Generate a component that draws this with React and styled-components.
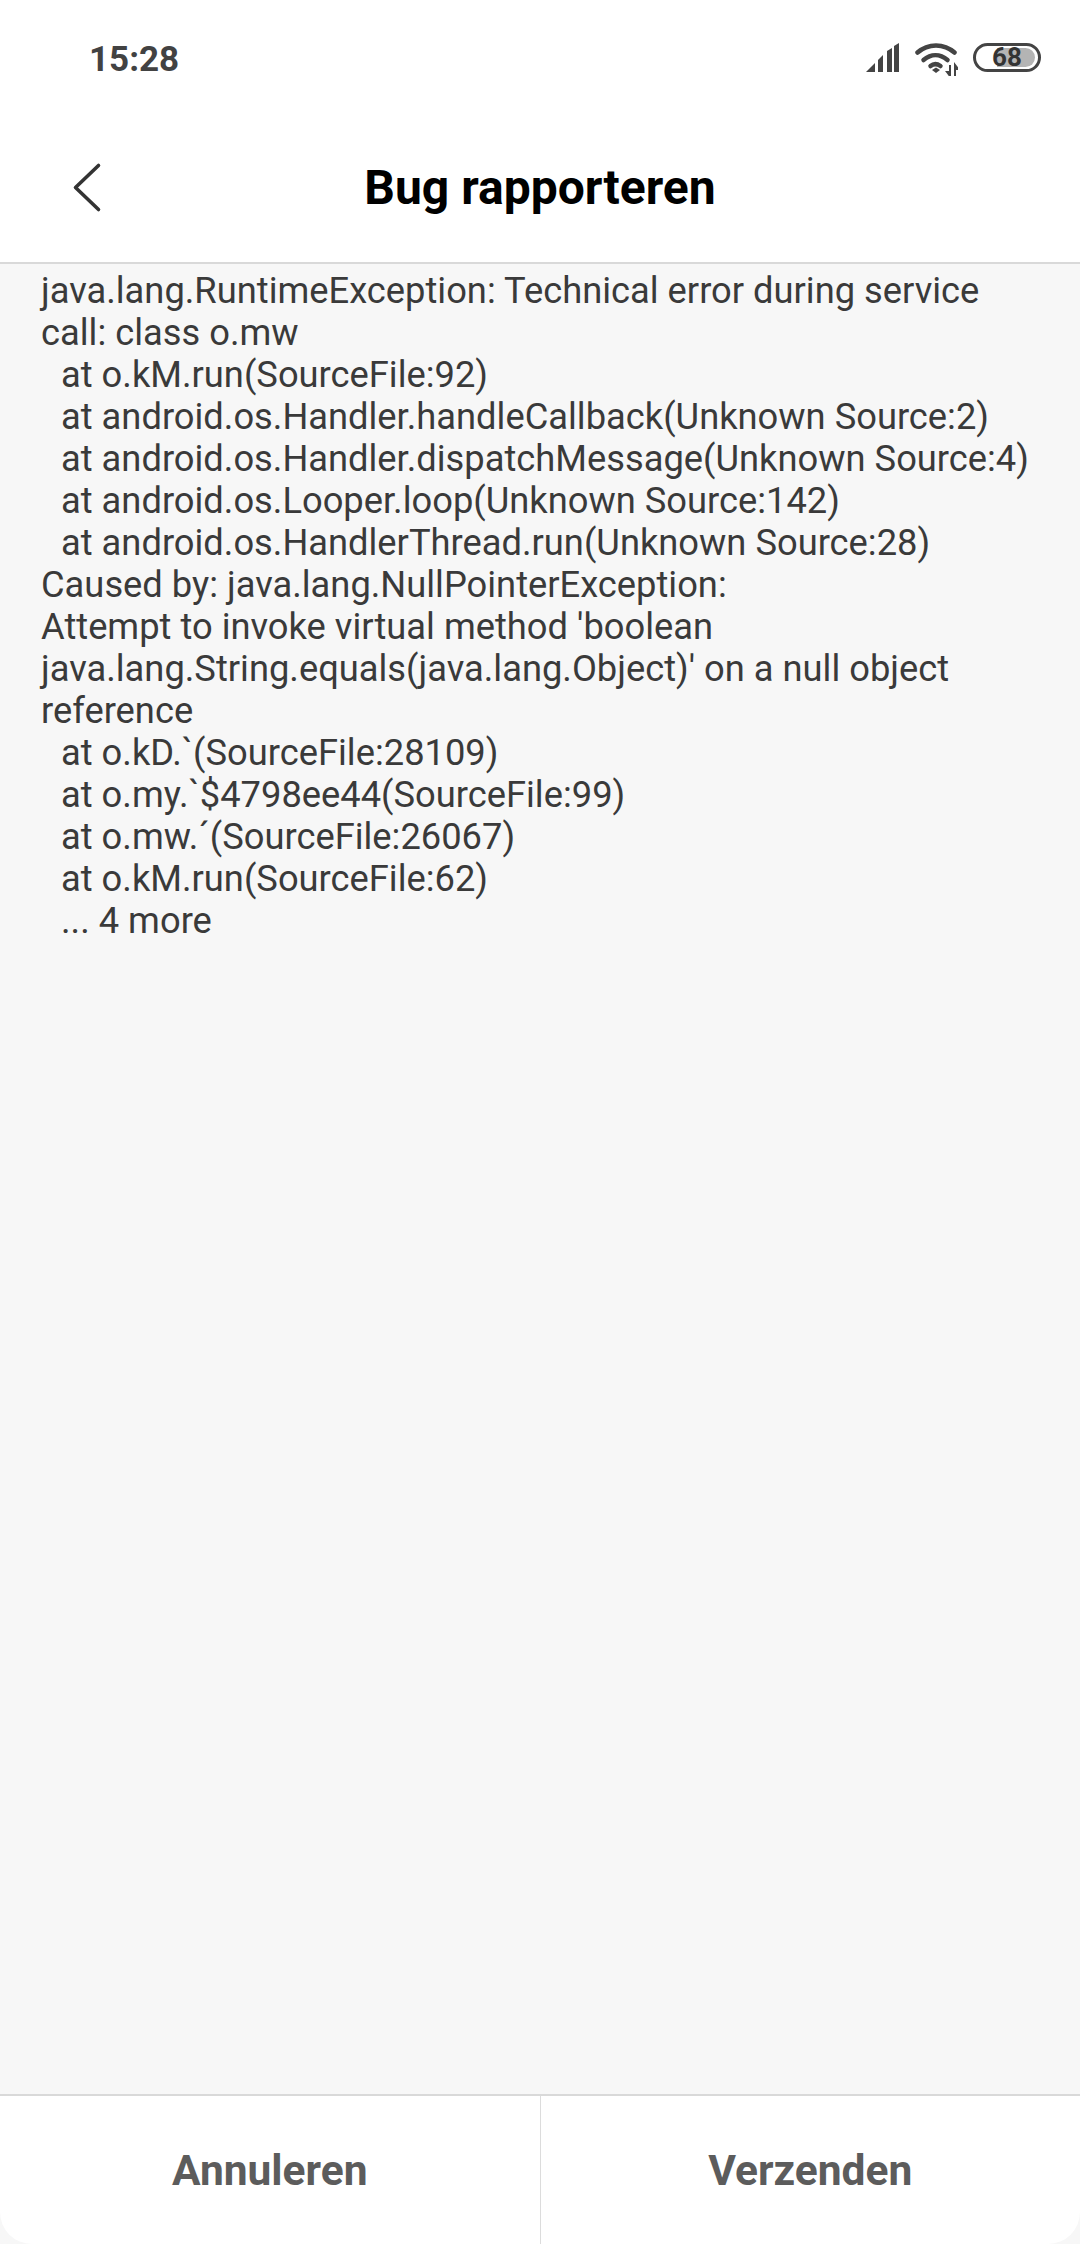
import React from 'react';
import styled, { createGlobalStyle } from 'styled-components';

const Global = createGlobalStyle`
  html, body { margin: 0; padding: 0; background: #f7f7f7; }
  body { font-family: Roboto, "Liberation Sans", sans-serif; }
`;

const Screen = styled.div`
  width: 1080px;
  height: 2244px;
  display: flex;
  flex-direction: column;
  background: #f7f7f7;
  overflow: hidden;
`;

const StatusBar = styled.div`
  height: 118px;
  flex: none;
  display: flex;
  justify-content: space-between;
  align-items: flex-start;
  padding: 40px 39px 0 89px;
  box-sizing: border-box;
  background: #fff;
`;

const Time = styled.span`
  font-size: 35px;
  line-height: 40px;
  font-weight: 700;
  color: #424242;
`;

const StatusIcons = styled.div`
  display: flex;
  align-items: flex-start;
  gap: 15px;
  margin-top: 3px;
`;

const Battery = styled.div`
  position: relative;
  width: 68px;
  height: 29px;
  box-sizing: border-box;
  border: 3px solid #444;
  border-radius: 15px;
  overflow: hidden;
`;

const BatteryFill = styled.div`
  position: absolute;
  top: 2px;
  bottom: 2px;
  left: 21px;
  right: 3px;
  background: #b4b4b4;
  border-radius: 0 10px 10px 0;
`;

const BatteryLevel = styled.span`
  position: absolute;
  inset: 0;
  display: flex;
  align-items: center;
  justify-content: center;
  font-size: 26px;
  line-height: 23px;
  font-weight: 700;
  color: #333;
`;

const Header = styled.header`
  height: 146px;
  flex: none;
  display: flex;
  align-items: center;
  justify-content: center;
  position: relative;
  padding-bottom: 4px;
  background: #fff;
  border-bottom: 2px solid #d9d9d9;
  box-sizing: border-box;
`;

const BackButton = styled.div`
  position: absolute;
  left: 72px;
  top: 44px;
  width: 30px;
  height: 54px;
`;

const Title = styled.h1`
  margin: 0;
  font-size: 48px;
  line-height: 54px;
  font-weight: 700;
  color: #000;
`;

const Log = styled.main`
  flex: 1;
  padding: 6px 20px 0 41px;
  font-size: 36.3px;
  line-height: 42px;
  color: #3a3a3a;
`;

const Line = styled.div`
  white-space: pre;
  padding-left: ${(p) => (p.$indent ? '20px' : '0')};
`;

const Footer = styled.footer`
  height: 150px;
  flex: none;
  display: flex;
  background: #fff;
  border-top: 2px solid #d9d9d9;
  border-radius: 0 0 32px 32px;
  box-sizing: border-box;
`;

const FooterButton = styled.button`
  flex: 1;
  border: 0;
  padding: 0;
  background: transparent;
  font-family: inherit;
  font-size: 42.5px;
  font-weight: 700;
  color: #5c5c5c;
  & + & {
    border-left: 1px solid #dcdcdc;
  }
`;

const lines = [
  ['java.lang.RuntimeException: Technical error during service'],
  ['call: class o.mw'],
  ['at o.kM.run(SourceFile:92)', true],
  ['at android.os.Handler.handleCallback(Unknown Source:2)', true],
  ['at android.os.Handler.dispatchMessage(Unknown Source:4)', true],
  ['at android.os.Looper.loop(Unknown Source:142)', true],
  ['at android.os.HandlerThread.run(Unknown Source:28)', true],
  ['Caused by: java.lang.NullPointerException:'],
  ["Attempt to invoke virtual method 'boolean"],
  ["java.lang.String.equals(java.lang.Object)' on a null object"],
  ['reference'],
  ['at o.kD.`(SourceFile:28109)', true],
  ['at o.my.`$4798ee44(SourceFile:99)', true],
  ['at o.mw.´(SourceFile:26067)', true],
  ['at o.kM.run(SourceFile:62)', true],
  ['... 4 more', true],
];

const App = () => {
  return (
    <Screen>
      <Global />
      <StatusBar>
        <Time>15:28</Time>
        <StatusIcons>
          <svg width="34" height="29" viewBox="0 0 34 29" fill="#444">
            <path d="M0 29 L9 20 V29 Z" />
            <path d="M12 17 L17 12 V29 H12 Z" />
            <path d="M21 8 L26 5 V29 H21 Z" />
            <path d="M28 3 L33 0 V29 H28 Z" />
          </svg>
          <svg width="43" height="33" viewBox="0 0 43 33" fill="none" stroke="#444" strokeWidth="4.5" strokeLinecap="round">
            <path d="M2.5 9.5 C13 0 29 0 39.5 9.5" />
            <path d="M8.5 17 C16 10.5 25 10.5 32.5 17" />
            <path d="M15.5 23 C18.5 20.5 22 20.5 25.5 23" />
            <path d="M17 27 L21 24.5 L25 27 L21 30 Z" fill="#444" stroke="none" />
            <path d="M35 22 V33 M32 29 L35 33 L35 29 Z M40 33 V22 M43 26 L40 22 L40 26 Z" fill="#444" strokeWidth="2" strokeLinecap="butt" />
          </svg>
          <Battery>
            <BatteryFill />
            <BatteryLevel>68</BatteryLevel>
          </Battery>
        </StatusIcons>
      </StatusBar>
      <Header>
        <BackButton>
          <svg width="30" height="54" viewBox="0 0 30 54" fill="none" stroke="#333" strokeWidth="3.6" strokeLinecap="round" strokeLinejoin="round">
            <path d="M26.5 3.5 L3.5 25.5 L26.5 47.5" />
          </svg>
        </BackButton>
        <Title>Bug rapporteren</Title>
      </Header>
      <Log>
        {lines.map(([text, indent], i) => (
          <Line key={i} $indent={indent}>{text}</Line>
        ))}
      </Log>
      <Footer>
        <FooterButton>Annuleren</FooterButton>
        <FooterButton>Verzenden</FooterButton>
      </Footer>
    </Screen>
  );
};

export default App;
